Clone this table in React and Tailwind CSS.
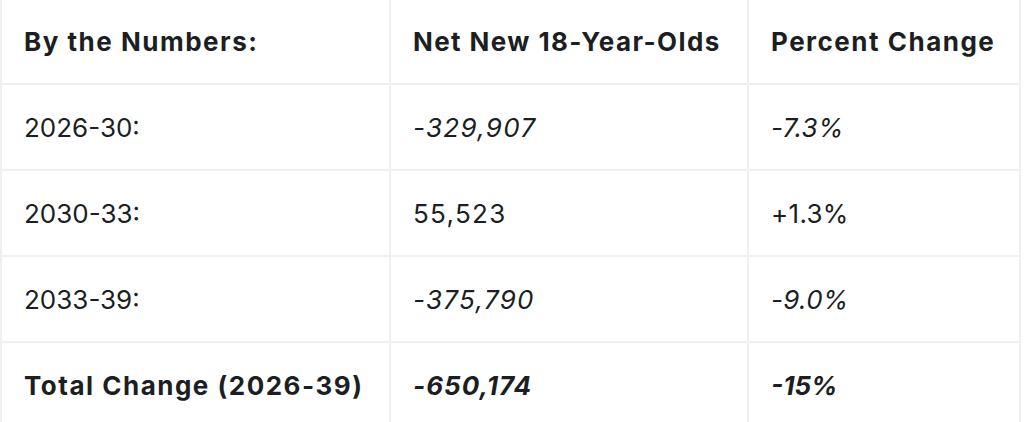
import React from "react";

const rows = [
  { label: "2026-30:", net: "-329,907", pct: "-7.3%", italic: true },
  { label: "2030-33:", net: "55,523", pct: "+1.3%", italic: false },
  { label: "2033-39:", net: "-375,790", pct: "-9.0%", italic: true },
];

const cell = "flex items-center pl-[22px] border-r-2 border-b-2 border-[#eff1f1] whitespace-nowrap text-[26px]";

export default function App() {
  return (
    <div
      className="w-[1024px] h-[422px] bg-white overflow-hidden text-[#1b1f24]"
      style={{ fontFamily: "Inter, 'Noto Sans', sans-serif" }}
    >
      <div className="grid grid-cols-[389px_358px_272px] border-l-2 border-[#eff1f1] w-[1021px]">
        <div className={`${cell} h-[85px] font-bold tracking-[1.5px]`}>By the Numbers:</div>
        <div className={`${cell} h-[85px] font-bold tracking-[1.4px]`}>Net New 18-Year-Olds</div>
        <div className={`${cell} h-[85px] font-bold tracking-[1.5px]`}>Percent Change</div>
        {rows.map((r) => (
          <React.Fragment key={r.label}>
            <div className={`${cell} h-[86px]`}>{r.label}</div>
            <div className={`${cell} h-[86px] tracking-[1.3px] ${r.italic ? "italic" : ""}`}>{r.net}</div>
            <div className={`${cell} h-[86px] tracking-[0.3px] ${r.italic ? "italic" : ""}`}>{r.pct}</div>
          </React.Fragment>
        ))}
        <div className={`${cell} h-[86px] font-bold tracking-[1.5px]`}>Total Change (2026-39)</div>
        <div className={`${cell} h-[86px] font-bold italic tracking-[1px]`}>-650,174</div>
        <div className={`${cell} h-[86px] font-bold italic`}>-15%</div>
      </div>
    </div>
  );
}
